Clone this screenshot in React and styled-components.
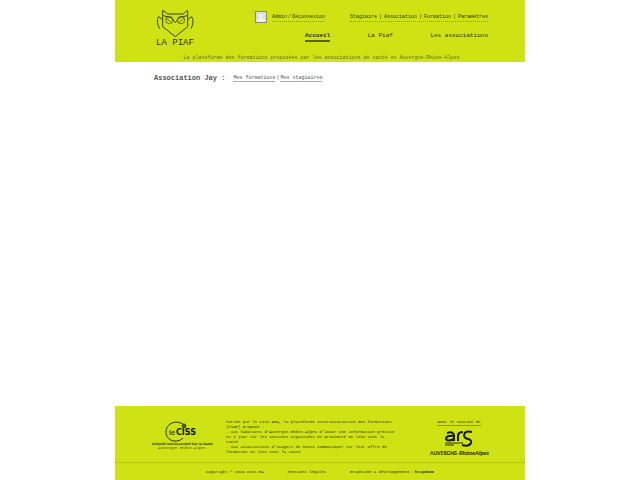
import React from "react";
import styled, { createGlobalStyle } from "styled-components";

const lime = "#cfe314";
const ink = "#2d3210";

const GlobalStyle = createGlobalStyle`
  * { box-sizing: border-box; }
  body {
    margin: 0;
    background: #fff;
    color: ${ink};
    font-family: "Liberation Mono", "Courier New", monospace;
    font-size: 5px;
    line-height: 6px;
  }
`;

const Page = styled.div`
  display: flex;
  flex-direction: column;
  width: 100%;
  max-width: 410px;
  min-height: 100vh;
  margin: 0 auto;
`;

const Header = styled.header`
  background: ${lime};
  padding: 8px 37px 1px 40px;
`;

const HeaderTop = styled.div`
  display: flex;
  gap: 60px;
`;

const Brand = styled.a`
  display: block;
  flex: none;
  width: 40px;
  color: ${ink};
  text-align: center;
  text-decoration: none;
  white-space: nowrap;
  font-size: 9px;
  line-height: 10px;

  svg {
    display: block;
    width: 40px;
    height: 30px;
  }
`;

const HeaderMenus = styled.div`
  flex: 1;
  padding-top: 3px;
`;

const Row = styled.div`
  display: flex;
  align-items: center;
  justify-content: space-between;
`;

const Account = styled.div`
  display: flex;
  align-items: center;
  gap: 5px;
`;

const Avatar = styled.svg`
  width: 12px;
  height: 12px;
  border: 1px solid #85906a;
  background: #dcdfe2;
`;

const Links = styled.div`
  display: flex;
  gap: ${({ $gap }) => $gap || "2px"};
  white-space: nowrap;
  padding-top: ${({ $line }) => ($line ? "1px" : "0")};
  line-height: ${({ $line }) => ($line ? "8px" : "6px")};
  border-bottom: ${({ $line }) => ($line ? "1px dotted #88951f" : "0")};
`;

const TextLink = styled.a`
  color: ${({ $soft }) => ($soft ? "#555" : ink)};
  text-decoration: none;
  border-bottom: ${({ $line }) => ($line ? "1px solid" : "0")};
  border-color: ${({ $soft }) => ($soft ? "#aaa" : "#88951f")};
`;

const MainNav = styled.nav`
  display: flex;
  justify-content: space-between;
  padding: 8px 0 0 50px;
`;

const NavLink = styled.a`
  color: ${ink};
  font-size: 6px;
  line-height: 9px;
  text-decoration: none;
  font-weight: ${({ $active }) => ($active ? 700 : 400)};
  border-bottom: 2px solid ${({ $active }) => ($active ? "#59640d" : "transparent")};
`;

const Tagline = styled.p`
  margin: 7px 0 0;
  text-align: center;
  color: #626c24;
`;

const Main = styled.main`
  flex: 1;
  padding: 12px 39px;
`;

const Heading = styled.div`
  display: flex;
  align-items: center;
  gap: 8px;
`;

const Title = styled.h1`
  margin: 0;
  color: #555;
  font-size: 7px;
  line-height: 8px;
`;

const Footer = styled.footer`
  background: ${lime};
  font-size: 4px;
  line-height: 5px;
`;

const FooterTop = styled.div`
  display: flex;
  align-items: flex-start;
  justify-content: space-between;
  padding: 14px 36px 4px 37px;
  border-bottom: 1px solid #b5c713;
`;

const About = styled.div`
  width: 190px;
  min-height: 38px;

  p { margin: 0; }
`;

const CissLogo = styled.svg`
  width: 61px;
  height: 32px;
`;

const Support = styled.div`
  display: flex;
  flex-direction: column;
  align-items: center;
`;

const ArsLogo = styled.svg`
  width: 60px;
  height: 30px;
  margin-top: 2px;
`;

const Legal = styled.div`
  display: flex;
  justify-content: center;
  gap: 24px;
  padding: 7px 0 5px;
`;

const session = ["Stagiaire", "Association", "Formation", "Paramètres"];

function OwlMark() {
  return (
    <svg viewBox="120 24 120 90" fill="none" stroke="#3d470f" strokeWidth="3" aria-hidden="true">
      <path d="M143 80V31L159 42H204L218 31V80L181 110Z" />
      <path d="M145 47L169 53L181 68L193 53L216 47" />
      <path d="M153 54L171 69M208 54L190 69" strokeWidth="2" />
      <circle cx="163" cy="60" r="11" strokeWidth="2" />
      <circle cx="198" cy="60" r="11" strokeWidth="2" />
      <path d="M143 59L131 50Q122 65 134 86M218 59L230 50Q239 65 228 86" />
    </svg>
  );
}

function Ciss() {
  return (
    <CissLogo viewBox="0 0 61 32" role="img" aria-label="le CISS">
      <path d="M32 5C25 -1 14 3 14 12C14 21 25 24 31 18" fill="none" stroke="#222b08" strokeWidth="1" />
      <text x="17" y="15" fontFamily="Liberation Sans, sans-serif" fontSize="8" fill="#222b08">le</text>
      <text x="24" y="15" fontFamily="DejaVu Sans, sans-serif" fontWeight="700" fontSize="8" fill="#101500">CISS</text>
      <circle cx="32" cy="6" r="2" fill={lime} stroke="#222b08" />
      <circle cx="32" cy="6" r="1" fill="#222b08" />
      <text x="30" y="25" textAnchor="middle" fontFamily="DejaVu Sans, sans-serif" fontWeight="700" fontSize="3" fill="#29310a">Collectif Interassociatif Sur la Santé</text>
      <text x="30" y="29" textAnchor="middle" fontFamily="Liberation Mono, monospace" fontSize="4" fill="#4d5913">Auvergne Rhône-Alpes</text>
    </CissLogo>
  );
}

function Ars() {
  return (
    <ArsLogo viewBox="0 0 60 30" role="img" aria-label="ARS Auvergne - Rhône-Alpes">
      <g fill="none" stroke="#151b00" strokeWidth="2">
        <path d="M18 5Q24 3 25 7V13M25 8Q17 7 17 11Q18 14 25 11" />
        <path d="M29 13V8Q29 4 34 4" />
        <path d="M43 4Q36 2 35 7Q35 10 39 11Q43 12 42 15Q40 19 33 17" />
      </g>
      <path d="M16 15H34M16 17H25" stroke="#29310a" strokeWidth="1" />
      <text x="1" y="27" fontFamily="Lato, sans-serif" fontWeight="700" fontSize="5" fill="#1b2200">AUVERGNE</text>
      <text x="27" y="27" fontFamily="Lato, sans-serif" fontWeight="900" fontSize="5" fill="#1b2200">-</text>
      <text x="30" y="27" fontFamily="Lato, sans-serif" fontWeight="700" fontStyle="italic" fontSize="6" fill="#1b2200">RhôneAlpes</text>
    </ArsLogo>
  );
}

export default function App() {
  return (
    <>
      <GlobalStyle />
      <Page>
        <Header>
          <HeaderTop>
            <Brand href="#">
              <OwlMark />
              LA PIAF
            </Brand>
            <HeaderMenus>
              <Row>
                <Account>
                  <Avatar viewBox="0 0 10 10" aria-hidden="true">
                    <circle cx="5" cy="4" r="2" fill="#f1f2f5" />
                    <path d="M1 10Q1 6 5 6Q9 6 9 10" fill="#f1f2f5" />
                  </Avatar>
                  <Links $line $gap="1px">
                    <TextLink href="#">Admin</TextLink>
                    <span>/</span>
                    <TextLink href="#">Déconnexion</TextLink>
                  </Links>
                </Account>
                <Links $line>
                  {session.map((label, i) => (
                    <React.Fragment key={label}>
                      {i > 0 && <span>|</span>}
                      <TextLink href="#">{label}</TextLink>
                    </React.Fragment>
                  ))}
                </Links>
              </Row>
              <MainNav>
                <NavLink href="#" $active>Accueil</NavLink>
                <NavLink href="#">La Piaf</NavLink>
                <NavLink href="#">Les associations</NavLink>
              </MainNav>
            </HeaderMenus>
          </HeaderTop>
          <Tagline>
            La plateforme des formations proposées par les associations de santé en Auvergne-Rhône-Alpes
          </Tagline>
        </Header>
        <Main>
          <Heading>
            <Title>Association Jay :</Title>
            <Links $gap="1px">
              <TextLink href="#" $soft $line>Mes formations</TextLink>
              <span>|</span>
              <TextLink href="#" $soft $line>Mes stagiaires</TextLink>
            </Links>
          </Heading>
        </Main>
        <Footer>
          <FooterTop>
            <Ciss />
            <About>
              <p>Portée par le CISS ARA, la plateforme interassociative des formations<br />(PIAF) propose :</p>
              <p>- aux habitants d'Auvergne-Rhône-Alpes d'avoir une information précise<br />et à jour sur les sessions organisées en proximité en lien avec la<br />santé</p>
              <p>- aux associations d'usagers de mieux communiquer sur leur offre de<br />formation en lien avec la santé</p>
            </About>
            <Support>
              <TextLink href="#" $line>Avec le soutien de</TextLink>
              <Ars />
            </Support>
          </FooterTop>
          <Legal>
            <span>Copyright © 2016 CISS-RA</span>
            <TextLink href="#">Mentions légales</TextLink>
            <span>Graphisme &amp; développement: <b>http5000</b></span>
          </Legal>
        </Footer>
      </Page>
    </>
  );
}
